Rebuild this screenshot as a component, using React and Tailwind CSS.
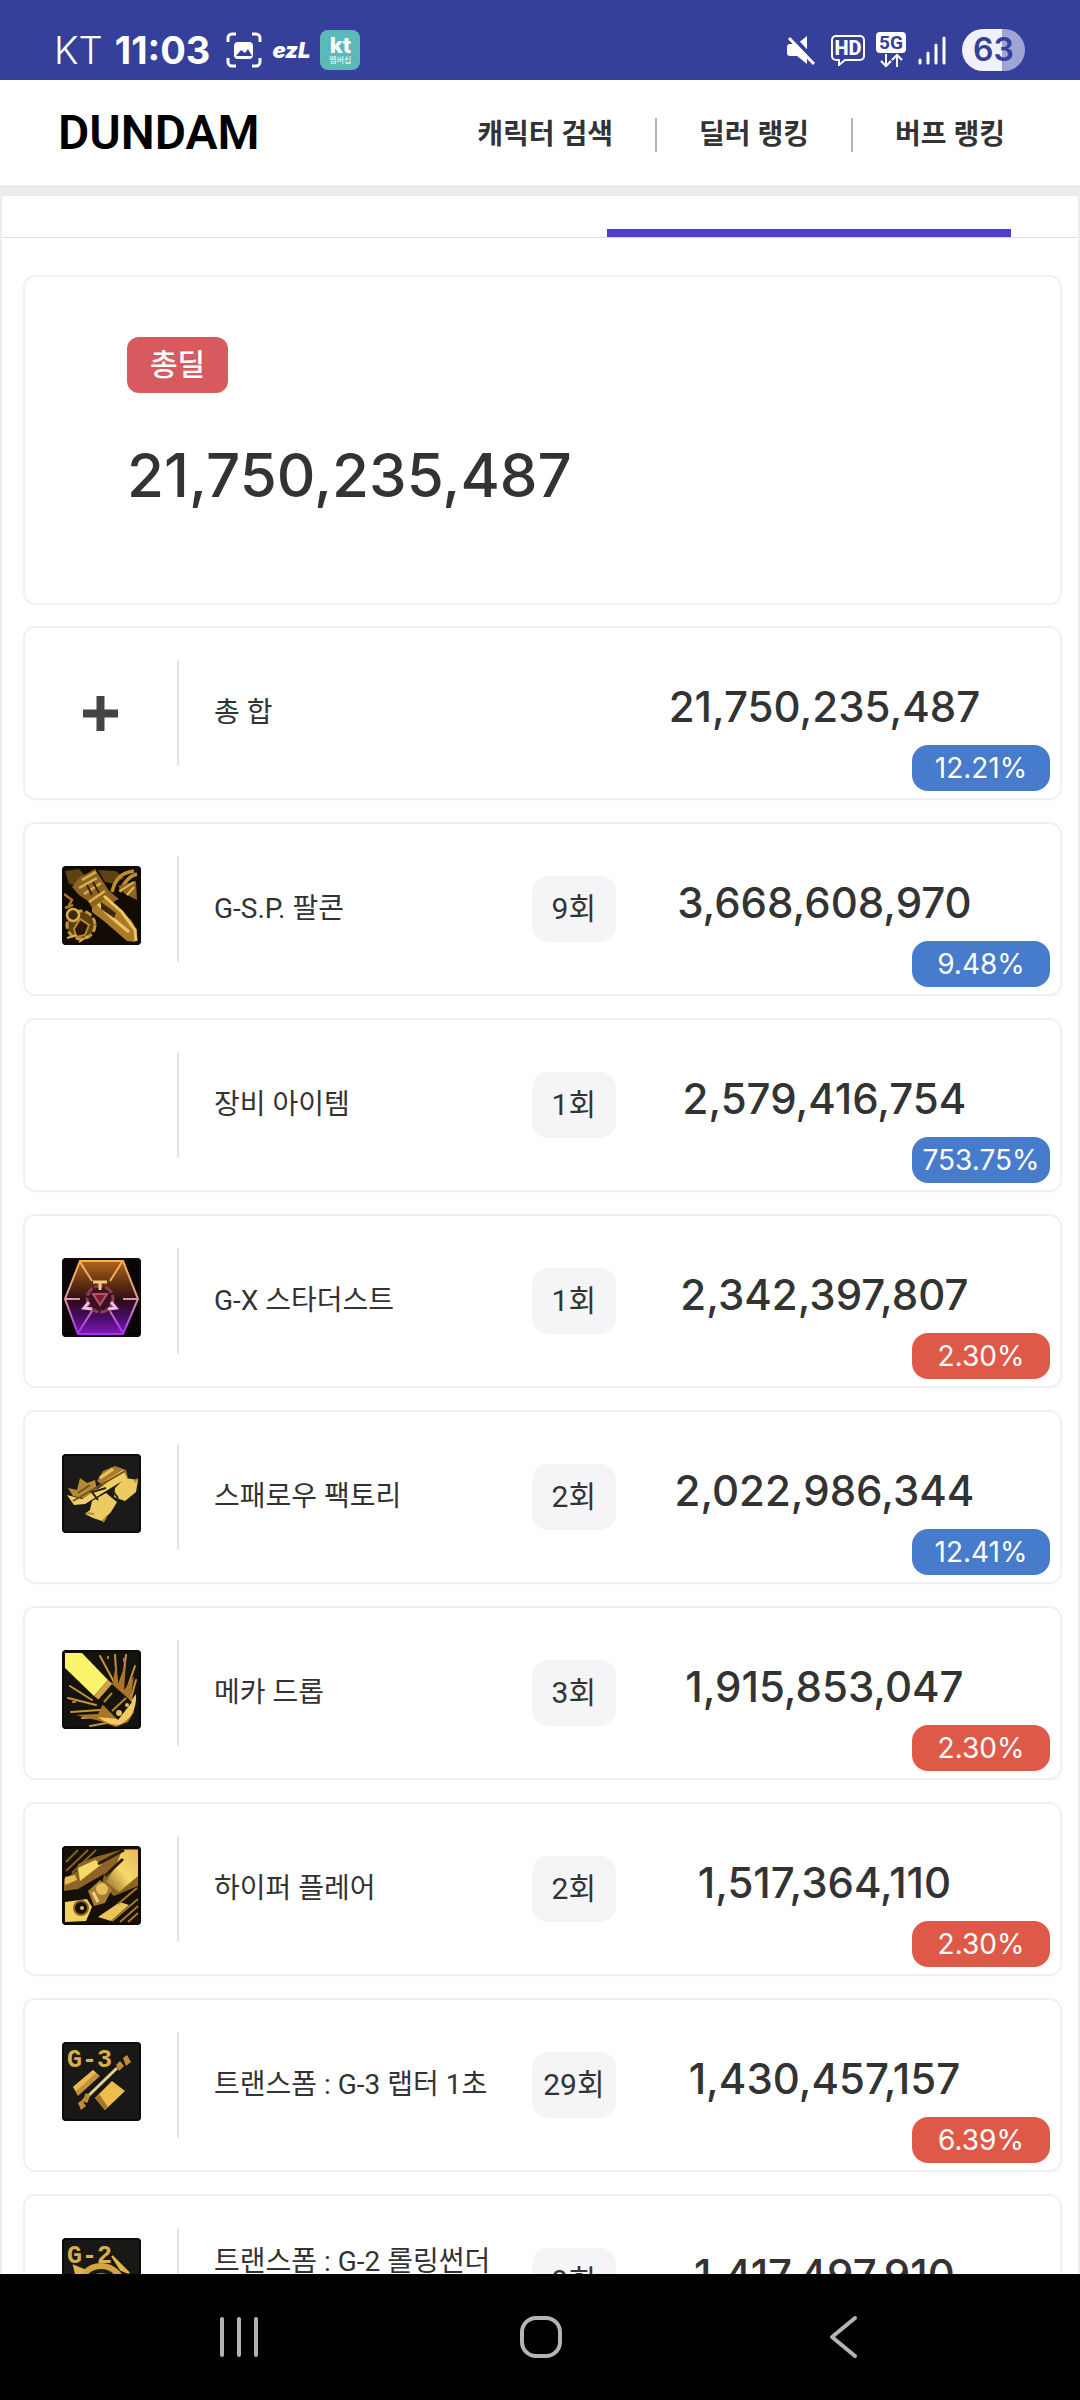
import clsx from 'clsx';

const navLinks = ['캐릭터 검색', '딜러 랭킹', '버프 랭킹'];

const skills = [
  { name: '총 합', icon: PlusIcon, damage: '21,750,235,487', rate: '12.21%', up: false },
  { name: 'G-S.P. 팔콘', icon: FalconIcon, count: 9, damage: '3,668,608,970', rate: '9.48%', up: false },
  { name: '장비 아이템', icon: null, count: 1, damage: '2,579,416,754', rate: '753.75%', up: false },
  { name: 'G-X 스타더스트', icon: StardustIcon, count: 1, damage: '2,342,397,807', rate: '2.30%', up: true },
  { name: '스패로우 팩토리', icon: SparrowIcon, count: 2, damage: '2,022,986,344', rate: '12.41%', up: false },
  { name: '메카 드롭', icon: MechaDropIcon, count: 3, damage: '1,915,853,047', rate: '2.30%', up: true },
  { name: '하이퍼 플레어', icon: FlareIcon, count: 2, damage: '1,517,364,110', rate: '2.30%', up: true },
  { name: '트랜스폼 : G-3 랩터 1초', icon: RaptorIcon, count: 29, damage: '1,430,457,157', rate: '6.39%', up: true },
  { name: '트랜스폼 : G-2 롤링썬더 1초', icon: ThunderIcon, count: 9, damage: '1,417,497,910', rate: '2.30%', up: true },
];

/* ---------- Skill icons ---------- */

function PlusIcon() {
  return (
    <svg viewBox="0 0 79 79" className="size-[79px]" aria-hidden="true">
      <path d="M38.5 26v35M21 43.5h35" stroke="#444" strokeWidth="8" />
    </svg>
  );
}

function SkillFrame({ children, fill = '#17150f' }) {
  return (
    <svg viewBox="0 0 79 79" className="size-[79px] rounded" aria-hidden="true">
      <rect width="79" height="79" fill={fill} />
      {children}
      <rect x="1" y="1" width="77" height="77" rx="3" fill="none" stroke="#0d0c0a" strokeWidth="2" />
    </svg>
  );
}

function FalconIcon() {
  return (
    <SkillFrame fill="#120c04">
      <path d="M3 5l14-2 8 9-7 8-11-2z" fill="#5f4214" />
      <path d="M36 4l18 1 8 7-10 6-9-2z" fill="#5c4215" />
      <path d="M17 12l16-9 9 14 5 8 10 8-15 8-10 4-6-10-9-6-7-8z" fill="#8c6422" />
      <path d="M20 14l14-8M17 22l18-10M22 28l17-11M27 36l16-11" stroke="#dcb04a" strokeWidth="2.5" />
      <path d="M25 19l5 10M31 16l6 11" stroke="#35230a" strokeWidth="2" />
      <path d="M30 42l15-11 24 23 6 10-2 12-8-1-22-19-13-10z" fill="#a97a2a" />
      <path d="M42 30l18 16 13 18 1 11M36 38l14 14 17 14" fill="none" stroke="#edc85c" strokeWidth="3" />
      <path d="M39 36l15 11-2 5-13-9z" fill="#3d280b" />
      <path d="M72 5c-14 2-19 9-22 21M75 8c-8 2-13 8-17 18" fill="none" stroke="#bd8c31" strokeWidth="3.5" />
      <path d="M56 20l18-5 1 19-12-6z" fill="#8c6423" />
      <path d="M58 25l14-9M65 29l7-8" stroke="#e2b950" strokeWidth="2" />
      <path d="M2 28l8 6-4 7M3 42l8-3" fill="none" stroke="#a97a2a" strokeWidth="2.5" />
      <circle cx="19" cy="59" r="14" fill="#5e4113" stroke="#c4953a" strokeWidth="3" strokeDasharray="7 3" />
      <circle cx="11" cy="49" r="6" fill="#3d280b" stroke="#dcae48" strokeWidth="2.5" />
      <path d="M12 63l6-10 9 6-4 10-9 2z" fill="#261806" stroke="#b6862f" strokeWidth="2" />
      <path d="M5 72l10-3M17 76l9-6" stroke="#dcae48" strokeWidth="2" />
    </SkillFrame>
  );
}

function StardustIcon() {
  return (
    <SkillFrame fill="#0c0508">
      <defs>
        <linearGradient id="stardust" x1="0" y1="0" x2="0" y2="1">
          <stop offset="0" stopColor="#b0641c" />
          <stop offset="0.35" stopColor="#57280f" />
          <stop offset="0.55" stopColor="#2b0a1c" />
          <stop offset="0.8" stopColor="#4c0d70" />
          <stop offset="1" stopColor="#8417b8" />
        </linearGradient>
        <linearGradient id="stardustEdge" gradientUnits="userSpaceOnUse" x1="0" y1="3" x2="0" y2="76">
          <stop offset="0" stopColor="#f3b54a" />
          <stop offset="0.5" stopColor="#e09aa0" />
          <stop offset="1" stopColor="#a92ff0" />
        </linearGradient>
      </defs>
      <path d="M18 3h43l15 38-15 35H16L3 41z" fill="url(#stardust)" stroke="url(#stardustEdge)" strokeWidth="2" />
      <path d="M18 4l12 19M60 4L48 23M3 41h15M61 41h15M16 75l14-22M61 75L48 53" stroke="url(#stardustEdge)" strokeWidth="2" />
      <circle cx="38" cy="41" r="13" fill="#3c1026" stroke="#8c3c4c" strokeWidth="3" strokeDasharray="9 2" />
      <path d="M31 24h14M38 24v8" stroke="#f2c77e" strokeWidth="3" />
      <path d="M31 36l7 11 7-11z" fill="#7a2039" stroke="#b9555c" strokeWidth="2" />
      <path d="M27 44l-5 6 8 1M49 44l5 6-8 1" fill="none" stroke="#f0bde4" strokeWidth="3" />
    </SkillFrame>
  );
}

function SparrowIcon() {
  return (
    <SkillFrame fill="#1b1a18">
      <path d="M6 34l9 2 3-12 7 5 8-3 2 10-14 8-10-2z" fill="#b58a3a" />
      <path d="M35 27l6-10 12-5 11 4 2 8-20 11z" fill="#a87d30" />
      <path d="M38 24l13-9M44 28l18-11" stroke="#e8c65e" strokeWidth="3" />
      <path d="M53 34l10-10 13 2-2 12-11 9-11-4z" fill="#eccb61" />
      <path d="M30 47l14-8 11 9-6 10-9 9-9-3-8-4 5-4z" fill="#eccb61" />
      <path d="M5 41l15 4 42-27 3 6-42 26-11 1z" fill="#f2cf66" />
      <path d="M11 47l52-30M16 39l12-8" stroke="#745019" strokeWidth="2" />
      <path d="M36 46l-6-8 14-4M50 36l6 8" fill="none" stroke="#2a1e0c" strokeWidth="2" />
      <path d="M44 63l-3 5M72 28l4-3M24 59l8 1" stroke="#b58a3a" strokeWidth="2" />
    </SkillFrame>
  );
}

function MechaDropIcon() {
  return (
    <SkillFrame fill="#14130f">
      <g stroke="#c79437" strokeWidth="2" strokeLinecap="round">
        <path d="M52 32L38 6M55 34l-2-29M60 36l4-31M64 42l9-26M68 52l6-22" />
        <path d="M30 50L8 36M34 55L6 48M38 60L9 62M44 67L20 68M50 72l-22 4" />
      </g>
      <path d="M50 36l4-22 2 20 8-22-2 28 10-14-4 26 4 10-6 10-12 5-16-6-24-6 22-1z" fill="#a77428" />
      <path d="M74 44c1 16-6 27-18 31-8 0-14-4-20-8l20 2z" fill="#f2cc62" />
      <path d="M3 3h17l26 27-14 16L3 18z" fill="#fbf56e" />
      <path d="M32 46l14-16 5 4-13 17z" fill="#d2a541" />
      <path d="M36 50l14-16 20 18-14 18z" fill="#17130a" />
      <path d="M50 61l14-13M42 52l8-9" stroke="#b3852e" strokeWidth="2" />
      <circle cx="57" cy="63" r="3" fill="#e2bd5c" />
      <circle cx="65" cy="55" r="2" fill="#e2bd5c" />
      <path d="M10 52h4M46 6v3M62 8v4" stroke="#a77b30" strokeWidth="2" />
    </SkillFrame>
  );
}

function FlareIcon() {
  return (
    <SkillFrame fill="#171006">
      <defs>
        <linearGradient id="flare" x1="1" y1="0" x2="0" y2="1">
          <stop offset="0" stopColor="#e7b956" />
          <stop offset="0.5" stopColor="#f6da6a" />
          <stop offset="1" stopColor="#8c6524" />
        </linearGradient>
      </defs>
      <path d="M4 16L16 4M4 25L26 4M10 27L34 4" stroke="#856024" strokeWidth="2" />
      <path d="M2 33l13-8 1-7 17-7L62 3h14v37L52 50 40 39l2-11-26 15-14 2z" fill="#8c6526" />
      <path d="M16 22l17-8 7 4-22 17z" fill="#f6d867" />
      <path d="M3 31l10-2 2 5-12 5z" fill="#e4be55" />
      <path d="M60 4h16v26L57 46 44 36l10-16z" fill="url(#flare)" />
      <path d="M36 18L62 4M43 30l18-17" stroke="#2b1d09" strokeWidth="3" />
      <path d="M26 45l12-11 12 9-7 14-11 3z" fill="#a67c32" />
      <circle cx="40" cy="43" r="6" fill="#e4bf5c" />
      <path d="M31 46l5 10" stroke="#f0d277" strokeWidth="3" />
      <path d="M3 56l22-3 5 8-6 14-21 1z" fill="#f3d260" />
      <circle cx="19" cy="62" r="7" fill="#17100a" stroke="#8c6526" strokeWidth="2" />
      <circle cx="20" cy="62" r="2" fill="#e4bf5c" />
      <path d="M36 71l22-15 9 3-18 16z" fill="#e9c457" />
      <path d="M56 58l19-16M50 75l26-22M58 76l18-16M66 76l10-9" stroke="#a0762d" strokeWidth="2" />
    </SkillFrame>
  );
}

function IconCode({ children }) {
  return (
    <text x="5" y="25" fill="#d9b045" fontFamily="Liberation Mono, monospace" fontWeight="700" fontSize="25">
      {children}
    </text>
  );
}

function RaptorIcon() {
  return (
    <SkillFrame fill="#191816">
      <IconCode>G-3</IconCode>
      <path d="M11 45l20-17 7 6-22 20z" fill="#c4923a" />
      <path d="M11 45l20-17 3 3-20 18z" fill="#e9b84f" />
      <path d="M33 56l17-17 13 10-20 19z" fill="#edbd4e" />
      <path d="M33 56l10 12 3-3-9-13z" fill="#a87429" />
      <path d="M21 59l34-33" stroke="#e2d38a" strokeWidth="3" />
      <path d="M54 23l4-4 4 5-5 5zM61 16l4-3 4 7-5 4zM16 61l4-3 4 6-5 4z" fill="#c38b34" />
      <path d="M26 52l-3 8" stroke="#c38b34" strokeWidth="5" />
    </SkillFrame>
  );
}

function ThunderIcon() {
  return (
    <SkillFrame fill="#191816">
      <circle cx="39" cy="50" r="22" fill="none" stroke="#d3a442" strokeWidth="6" />
      <circle cx="39" cy="50" r="13" fill="#4f3410" stroke="#a8772c" strokeWidth="4" />
      <path d="M12 28l10 4-7 8zM50 18l17 17-8-3z" fill="#e0b34b" stroke="#e0b34b" strokeWidth="2" />
      <IconCode>G-2</IconCode>
    </SkillFrame>
  );
}

/* ---------- Device bars ---------- */

function StatusBar() {
  return (
    <div className="flex h-20 shrink-0 items-center justify-between bg-[#35409a] pt-5 pr-[55px] pl-[54px] font-['Inter',sans-serif] text-white">
      <div className="flex items-center">
        <span className="text-[38px] leading-10 font-light">KT</span>
        <span className="ml-3 text-[38px] leading-10 font-bold">11:03</span>
        <svg viewBox="0 0 36 36" className="ml-4 size-9" fill="none" aria-hidden="true">
          <path d="M2 10V6a4 4 0 0 1 4-4h4M26 2h4a4 4 0 0 1 4 4v4M34 26v4a4 4 0 0 1-4 4h-4M10 34H6a4 4 0 0 1-4-4v-4" stroke="#fff" strokeWidth="3" />
          <rect x="8" y="10" width="19" height="17" rx="4" fill="#fff" />
          <path d="M10 24l5-6 4 3 3-4 4 7z" fill="#35409a" />
        </svg>
        <span className="ml-[10px] w-10 text-[22px] leading-6 font-black italic">ezL</span>
        <span className="ml-2 flex size-10 flex-col items-center justify-center rounded-lg bg-[#5db8b8]">
          <span className="text-[22px] leading-5 font-extrabold">kt</span>
          <span className="font-['Noto_Sans_CJK_KR',sans-serif] text-[8px] leading-[10px]">멤버십</span>
        </span>
      </div>
      <div className="flex items-center">
        <svg viewBox="0 0 30 30" className="size-[30px]" aria-hidden="true">
          <path d="M21 1v28l-10-8H4a3 3 0 0 1-3-3v-6a3 3 0 0 1 3-3h7z" fill="#fff" />
          <path d="M5 0l25 27" stroke="#35409a" strokeWidth="4" />
          <path d="M3 3l25 26" stroke="#fff" strokeWidth="3" />
        </svg>
        <svg viewBox="0 0 36 32" className="ml-[14px] h-8 w-9" aria-hidden="true">
          <path d="M6 2h24a4 4 0 0 1 4 4v16a4 4 0 0 1-4 4H15l-6 5v-5H6a4 4 0 0 1-4-4V6a4 4 0 0 1 4-4z" fill="none" stroke="#fff" strokeWidth="2" />
          <text x="18" y="21" textAnchor="middle" fill="#fff" fontFamily="Roboto, sans-serif" fontSize="20" fontWeight="800">HD</text>
        </svg>
        <svg viewBox="0 0 30 36" className="ml-[10px] h-9 w-[30px]" aria-hidden="true">
          <rect width="30" height="21" rx="4" fill="#fff" />
          <text x="15" y="17" textAnchor="middle" fill="#35409a" fontFamily="Roboto, sans-serif" fontSize="19" fontWeight="700">5G</text>
          <path d="M10 22v12M5 29l5 5 5-5M21 35V23M16 28l5-5 5 5" fill="none" stroke="#fff" strokeWidth="2" />
        </svg>
        <svg viewBox="0 0 28 30" className="ml-3 h-[30px] w-7" aria-hidden="true">
          <path d="M2 25v3M10 18v10M18 10v18M26 3v25" stroke="#fff" strokeWidth="3" strokeLinecap="round" />
        </svg>
        <span className="ml-4 flex h-[42px] w-[63px] items-center justify-center rounded-full bg-linear-to-r from-[#f0f1fa] from-63% to-[#a0a4d2] to-63% text-[32px] leading-9 font-semibold text-[#35409a]">
          63
        </span>
      </div>
    </div>
  );
}

function SystemNav() {
  return (
    <div className="flex h-[126px] shrink-0 items-center justify-center gap-[258px] bg-black text-[#b4b4b4]">
      <button type="button" aria-label="최근 앱">
        <svg viewBox="0 0 44 44" className="size-11" fill="none" stroke="currentColor" strokeWidth="4" strokeLinecap="round">
          <path d="M6 4v36M23 4v36M40 4v36" />
        </svg>
      </button>
      <button type="button" aria-label="홈">
        <svg viewBox="0 0 44 44" className="size-11" fill="none" stroke="currentColor" strokeWidth="4">
          <rect x="4" y="3" width="38" height="38" rx="14" />
        </svg>
      </button>
      <button type="button" aria-label="뒤로">
        <svg viewBox="0 0 44 44" className="size-11" fill="none" stroke="currentColor" strokeWidth="4" strokeLinecap="round" strokeLinejoin="round">
          <path d="M35 3L12 22l23 19" />
        </svg>
      </button>
    </div>
  );
}

/* ---------- Page ---------- */

function SkillRow({ skill }) {
  const Icon = skill.icon;

  return (
    <li className="relative flex h-[174px] items-center rounded-xl border-2 border-[#f1f1f2] bg-white pr-[27px] pl-[37px] shadow-[0_0_18px_rgba(0,0,0,0.02)]">
      <div className="size-[79px] shrink-0 -translate-y-1">{Icon && <Icon />}</div>
      <div className="mr-[35px] ml-9 h-[106px] w-0.5 shrink-0 bg-[#e4e4e4]" />
      <p className="min-w-0 flex-[317] text-[28px] leading-[38px] break-keep">{skill.name}</p>
      <div className="w-[84px] shrink-0">
        {skill.count && (
          <div className="flex h-[66px] items-center justify-center rounded-2xl bg-[#f5f5f7] text-[30px] leading-9">
            {skill.count}회
          </div>
        )}
      </div>
      <strong className="min-w-0 flex-[416] pb-3 text-center font-['Inter',sans-serif] text-[42px] leading-[54px] font-medium">
        {skill.damage}
      </strong>
      <span
        className={clsx(
          "absolute right-[10px] bottom-[7px] flex h-[46px] w-[138px] items-center justify-center rounded-2xl font-['Inter',sans-serif] text-[28px] leading-8 text-white",
          skill.up ? 'bg-[#df5948]' : 'bg-[#477bcb]'
        )}
      >
        {skill.rate}
      </span>
    </li>
  );
}

export default function App() {
  return (
    <div className="flex h-screen flex-col overflow-hidden bg-white font-['Roboto','Noto_Sans_CJK_KR',sans-serif] text-[#333]">
      <StatusBar />

      <header className="flex h-[105px] shrink-0 items-center justify-between pr-[75px] pl-[58px]">
        <a href="#" className="text-[48px] leading-[60px] font-semibold text-black">
          DUNDAM
        </a>
        <nav className="flex items-center gap-[42px] pt-1">
          {navLinks.map((label, i) => (
            <div key={label} className="flex items-center gap-[42px]">
              {i > 0 && <span className="h-[34px] w-0.5 bg-[#b5b5b5]" />}
              <a href="#" className="text-[28px] leading-10 font-bold">{label}</a>
            </div>
          ))}
        </nav>
      </header>

      <main className="min-h-0 flex-1 overflow-hidden border-x-2 border-t-[11px] border-[#ededed]">
        {/* Active tab underline */}
        <div className="flex h-[42px] items-end justify-end border-b border-[#dcdcdc] pr-[67px]">
          <div className="h-2 w-[404px] bg-[#4f41cb]" />
        </div>

        <div className="pt-[37px] pr-4 pl-[21px]">
          <section className="rounded-xl border-2 border-[#f1f1f2] bg-white px-[102px] pt-[60px] pb-24 shadow-[0_0_18px_rgba(0,0,0,0.02)]">
            <h2 className="flex h-14 w-[101px] items-center justify-center rounded-xl bg-[#d75a5f] text-[30px] leading-9 font-medium text-white">
              총딜
            </h2>
            <p className="mt-[50px] font-['Inter',sans-serif] text-[60px] leading-[64px] font-medium">21,750,235,487</p>
          </section>

          <ul className="mt-[21px] flex flex-col gap-[22px]">
            {skills.map((skill) => (
              <SkillRow key={skill.name} skill={skill} />
            ))}
          </ul>
        </div>
      </main>

      <SystemNav />
    </div>
  );
}
